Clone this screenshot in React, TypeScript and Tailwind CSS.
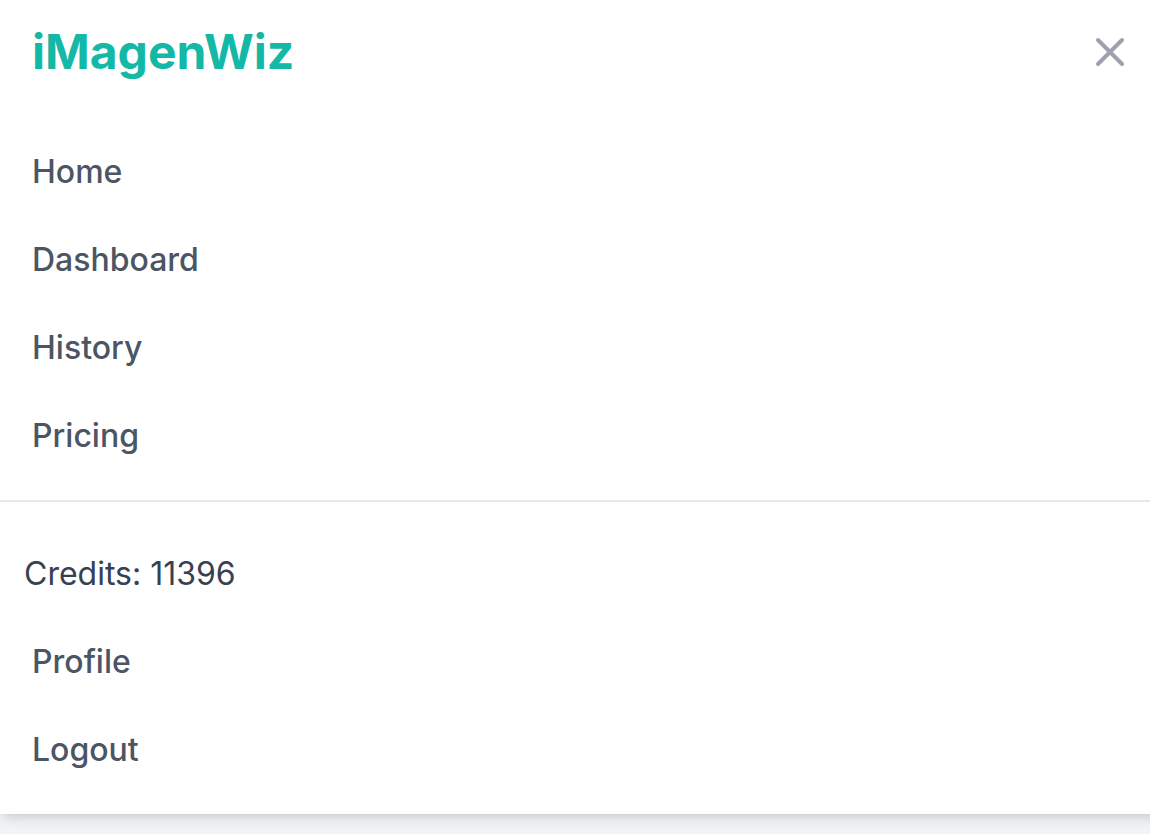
import { useState } from "react";

const pages = ["Home", "Dashboard", "History", "Pricing"];
const linkClass =
  "block border-l-8 border-transparent py-4 pl-6 pr-8 text-[32px] leading-[48px] font-medium text-[#4b5563] hover:bg-gray-50";

export default function App() {
  const [open, setOpen] = useState(true);
  return (
    <div className="min-h-screen overflow-x-clip bg-[#f3f4f6] font-['Inter',sans-serif] antialiased">
      {/* The bar runs past the right edge so that its shadow stays even there. */}
      <nav className="-mr-4 bg-white pr-4 shadow-[0_8px_12px_-2px_rgba(0,0,0,0.1),0_4px_8px_-4px_rgba(0,0,0,0.1)]">
        <div className="flex h-[104px] items-center justify-between pl-8 pr-4">
          <a href="#home" className="text-[48px] leading-[64px] font-bold text-[#14b8a6]">
            iMagenWiz
          </a>
          <button
            type="button"
            aria-label="Toggle menu"
            aria-expanded={open}
            onClick={() => setOpen(!open)}
            className="flex size-12 items-center justify-center text-[#9ca3af]"
          >
            <svg viewBox="0 0 24 24" className="size-12" fill="none" stroke="currentColor" strokeWidth="2" strokeLinecap="round" strokeLinejoin="round" aria-hidden="true">
              <path d="M18 6 6 18M6 6l12 12" />
            </svg>
          </button>
        </div>
        {open && (
          <div className="-mr-4">
            <div className="flex flex-col gap-2 pt-7 pb-6">
              {pages.map((page) => (
                <a key={page} href={"#" + page.toLowerCase()} className={linkClass}>
                  {page}
                </a>
              ))}
            </div>
            <div className="flex flex-col gap-2 border-t-2 border-[#e5e7eb] pt-8 pb-6">
              <div className="px-6 py-4 text-[32px] leading-[48px] text-[#374151]">Credits: 11396</div>
              <a href="#profile" className={linkClass}>Profile</a>
              <button type="button" className={linkClass + " text-left"}>Logout</button>
            </div>
          </div>
        )}
      </nav>
    </div>
  );
}
